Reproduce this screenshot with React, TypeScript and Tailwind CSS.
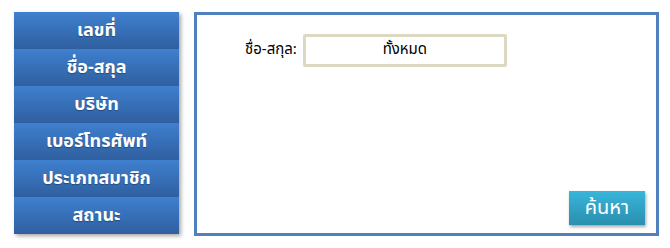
import React from "react";

const menuItems = [
  "เลขที่",
  "ชื่อ-สกุล",
  "บริษัท",
  "เบอร์โทรศัพท์",
  "ประเภทสมาชิก",
  "สถานะ",
];

const font = { fontFamily: 'Tahoma, "Noto Sans Thai", "Noto Sans", sans-serif' };

export default function App() {
  return (
    <div className="w-[670px] h-[248px] bg-white flex items-start pt-3 pl-[14px]" style={font}>
      <div className="w-[165px] flex flex-col shadow-[2px_2px_4px_rgba(0,0,0,0.35)]">
        {menuItems.map((item) => (
          <div
            key={item}
            className="h-[37px] flex items-center justify-center text-white font-bold text-[18px] bg-gradient-to-b from-[#3f80cf] to-[#2f5f9f] [text-shadow:0_1px_1px_rgba(0,0,0,0.3)]"
          >
            {item}
          </div>
        ))}
      </div>

      <div className="ml-[15px] w-[465px] h-[224px] border-[3px] border-[#4f81bd] flex flex-col">
        <div className="flex items-center mt-[19px] ml-[48px] gap-[6px]">
          <span className="text-[15px] text-black">ชื่อ-สกุล:</span>
          <div className="w-[204px] h-[33px] border-[3px] border-[#ddd8c2] rounded-[2px] flex items-center justify-center text-[15px] text-black">
            ทั้งหมด
          </div>
        </div>
        <div className="flex-1" />
        <div className="flex justify-end mr-[11px] mb-[8px]">
          <button className="w-[76px] h-[34px] bg-gradient-to-b from-[#38b6db] to-[#2a8fae] text-white text-[20px] leading-none shadow-[1px_2px_3px_rgba(0,0,0,0.35)]">
            ค้นหา
          </button>
        </div>
      </div>
    </div>
  );
}
